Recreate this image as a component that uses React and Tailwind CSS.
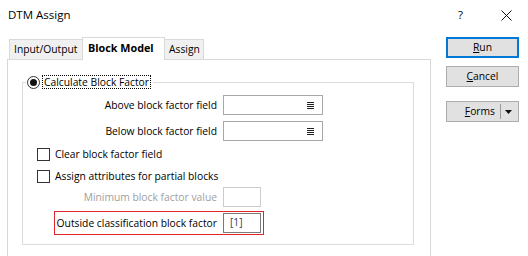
import React from 'react';

function ListIcon() {
  return (
    <svg width="7" height="7" viewBox="0 0 7 7" className="block">
      <path d="M0 0.5h7M0 2.5h7M0 4.5h7M0 6.5h7" stroke="#222" strokeWidth="1" />
    </svg>
  );
}

function FieldBox({ width = 'w-[100px]', icon = false, disabled = false, dark = false, children }) {
  return (
    <div
      className={`${width} h-[20px] border bg-white flex items-center px-[6px] ${
        disabled ? 'border-[#cccccc]' : dark ? 'border-[#7a7a7a]' : 'border-[#a8a8a8]'
      }`}
    >
      <span className="text-[#3a3a5c]">{children}</span>
      {icon && (
        <span className="ml-auto mr-[2px]">
          <ListIcon />
        </span>
      )}
    </div>
  );
}

function CheckRow({ label, className = '' }) {
  return (
    <div className={`flex items-center h-[13px] ml-[14px] ${className}`}>
      <div className="w-[13px] h-[13px] border border-[#333333] bg-white" />
      <span className="ml-[5px] leading-none">{label}</span>
    </div>
  );
}

function Button({ children, primary = false, className = '' }) {
  return (
    <div
      className={`w-[73px] h-[21px] flex items-center justify-center bg-[#e1e1e1] ${
        primary ? 'border-2 border-[#0078d7]' : 'border border-[#adadad]'
      } ${className}`}
    >
      {children}
    </div>
  );
}

export default function App() {
  return (
    <div className="w-[528px] h-[256px] bg-white overflow-hidden text-[10.3px] text-black font-['Open_Sans','Noto_Sans',sans-serif]">
      {/* Title bar */}
      <div className="h-[30px] flex items-center pl-[8px]">
        <span className="text-[11.5px]">DTM Assign</span>
        <span className="ml-auto text-[11.5px]">?</span>
        <svg width="11" height="11" viewBox="0 0 11 11" className="ml-[38px] mr-[16px]">
          <path d="M0.5 0.5L10.5 10.5M10.5 0.5L0.5 10.5" stroke="#111" strokeWidth="1" />
        </svg>
      </div>

      <div className="flex mt-[7px]">
        {/* Tab control */}
        <div className="ml-[7px] w-[424px]">
          <div className="flex items-end h-[22px] pl-[2px]">
            <div className="w-[73px] h-[20px] bg-[#f0f0f0] border-l border-t border-[#d9d9d9] flex items-center pl-[4px]">
              Input/Output
            </div>
            <div className="relative z-10 w-[83px] h-[23px] -mb-[1px] bg-white border-l border-t border-r border-[#d9d9d9] flex items-center pl-[5px] pb-[1px] font-bold text-[10.8px]">
              Block Model
            </div>
            <div className="w-[39px] h-[20px] bg-[#f0f0f0] border-t border-r border-[#d9d9d9] flex items-center pl-[4px]">
              Assign
            </div>
          </div>

          <div className="h-[200px] border border-[#d9d9d9] pt-[22px] pl-[14px]">
            {/* Group box */}
            <div className="relative w-[392px] h-[163px] border border-[#dcdcdc]">
              <div className="absolute -top-[8px] left-[3px] h-[14px] flex items-center bg-white pl-[1px] pr-[2px]">
                <div className="w-[13px] h-[13px] rounded-full border border-[#333333] flex items-center justify-center">
                  <div className="w-[7px] h-[7px] rounded-full bg-[#111111]" />
                </div>
                <span className="ml-[2px] px-[1px] h-[14px] flex items-center border border-dotted border-black leading-none">
                  Calculate Block Factor
                </span>
              </div>

              <div className="flex items-center mt-[12px]">
                <span className="w-[194px] text-right leading-none">Above block factor field</span>
                <div className="ml-[6px]">
                  <FieldBox icon />
                </div>
              </div>
              <div className="flex items-center mt-[6px]">
                <span className="w-[194px] text-right leading-none">Below block factor field</span>
                <div className="ml-[6px]">
                  <FieldBox icon />
                </div>
              </div>

              <CheckRow label="Clear block factor field" className="mt-[7px]" />
              <CheckRow label="Assign attributes for partial blocks" className="mt-[9px]" />

              <div className="flex items-center mt-[4px]">
                <span className="w-[194px] text-right leading-none text-[#a0a0a0]">Minimum block factor value</span>
                <div className="ml-[6px]">
                  <FieldBox width="w-[38px]" disabled />
                </div>
              </div>

              <div className="ml-[31px] mt-[4px] w-[210px] h-[24px] border border-[#e3242b] flex items-center">
                <span className="w-[162px] text-right leading-none whitespace-nowrap">Outside classification block factor</span>
                <div className="ml-[6px]">
                  <FieldBox width="w-[38px]" dark>
                    [1]
                  </FieldBox>
                </div>
              </div>
            </div>
          </div>
        </div>

        {/* Buttons */}
        <div className="ml-[15px] flex flex-col">
          <Button primary>
            <span>
              <span className="underline">R</span>un
            </span>
          </Button>
          <Button className="mt-[8px]">
            <span>
              <span className="underline">C</span>ancel
            </span>
          </Button>
          <div className="mt-[14px] w-[73px] h-[21px] flex items-center bg-[#e1e1e1] border border-[#adadad]">
            <span className="ml-auto">
              <span className="underline">F</span>orms
            </span>
            <div className="ml-[5px] w-px h-[15px] bg-[#9a9a9a]" />
            <svg width="7" height="4" viewBox="0 0 7 4" className="ml-[4px] mr-[6px]">
              <path d="M0 0H7L3.5 4Z" fill="#111" />
            </svg>
          </div>
        </div>
      </div>
    </div>
  );
}
